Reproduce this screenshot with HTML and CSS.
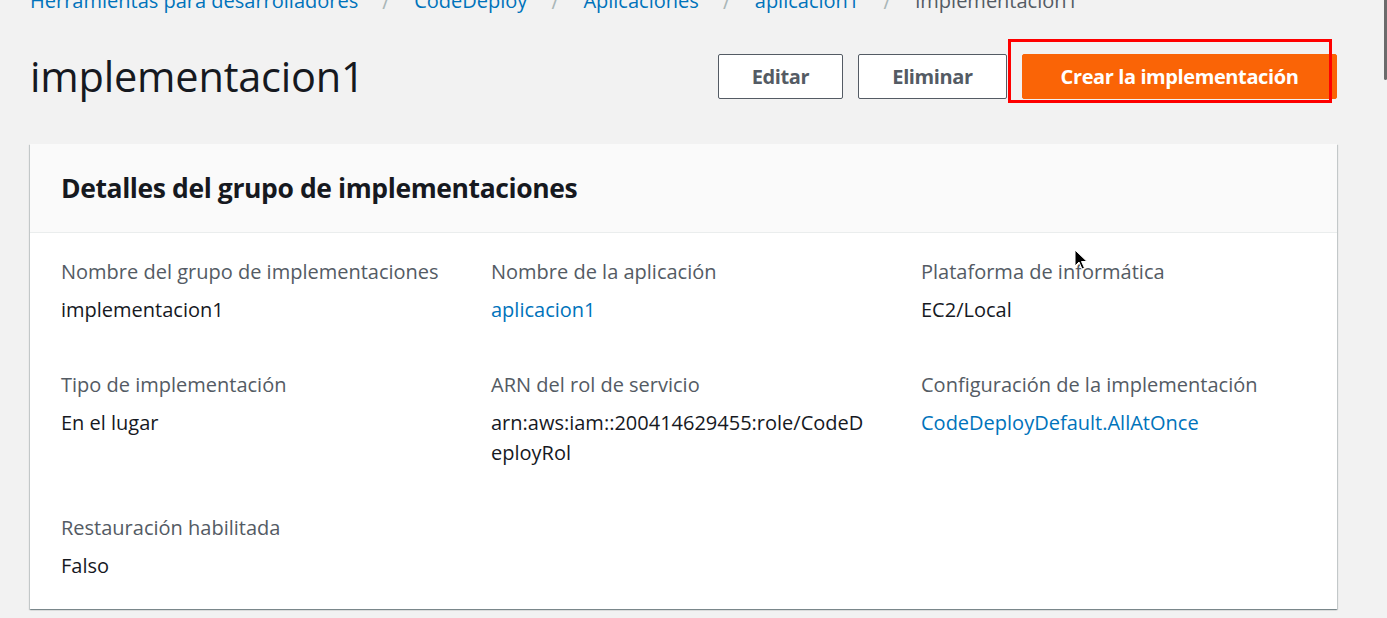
FILE: index.html
```html
<!DOCTYPE html>
<html lang="es">
<head>
<meta charset="utf-8">
<title>implementacion1</title>
<link rel="stylesheet" href="styles.css">
</head>
<body>
<div class="scrollbar"></div>
<main class="page">
  <nav class="breadcrumb">
    <a href="#">Herramientas para desarrolladores</a>
    <span class="sep">/</span>
    <a href="#">CodeDeploy</a>
    <span class="sep">/</span>
    <a href="#">Aplicaciones</a>
    <span class="sep">/</span>
    <a href="#">aplicacion1</a>
    <span class="sep">/</span>
    <span class="current">implementacion1</span>
  </nav>
  <header class="title-row">
    <h1 class="title">implementacion1</h1>
    <div class="actions">
      <button class="btn btn-edit">Editar</button>
      <button class="btn btn-delete">Eliminar</button>
      <div class="primary-wrap">
        <button class="btn btn-primary">Crear la implementación</button>
        <div class="highlight"></div>
      </div>
    </div>
  </header>
  <section class="card">
    <div class="card-header">
      <h2>Detalles del grupo de implementaciones</h2>
    </div>
    <div class="card-body">
      <div class="item">
        <div class="label">Nombre del grupo de implementaciones</div>
        <div class="value">implementacion1</div>
      </div>
      <div class="item">
        <div class="label">Nombre de la aplicación</div>
        <div class="value"><a href="#">aplicacion1</a></div>
      </div>
      <div class="item">
        <div class="label">Plataforma de informática</div>
        <div class="value">EC2/Local</div>
        <svg class="cursor" width="14" height="22" viewBox="0 0 14 22"><path d="M1 1 L1 17 L5 13 L8 20 L10.5 19 L7.5 12.5 L13 12.5 Z" fill="#000" stroke="#fff" stroke-width="1"/></svg>
      </div>
      <div class="item">
        <div class="label">Tipo de implementación</div>
        <div class="value">En el lugar</div>
      </div>
      <div class="item">
        <div class="label">ARN del rol de servicio</div>
        <div class="value arn">arn:aws:iam::200414629455:role/CodeDeployRol</div>
      </div>
      <div class="item">
        <div class="label">Configuración de la implementación</div>
        <div class="value"><a href="#">CodeDeployDefault.AllAtOnce</a></div>
      </div>
      <div class="item">
        <div class="label">Restauración habilitada</div>
        <div class="value">Falso</div>
      </div>
    </div>
  </section>
</main>
</body>
</html>
```

FILE: styles.css
```css
* { box-sizing: border-box; }
html, body { margin: 0; padding: 0; }
body {
  background: #f2f2f2;
  font-family: "Open Sans", "Noto Sans", sans-serif;
  color: #16191f;
  overflow: hidden;
  height: 618px;
  position: relative;
}
a { color: #0073bb; text-decoration: none; }

.scrollbar {
  position: absolute;
  right: 0;
  top: 0;
  width: 3px;
  height: 80px;
  background: #6b6b6b;
  border-radius: 0 0 2px 2px;
}

.page {
  width: 1307px;
  margin-left: 30px;
}

.breadcrumb {
  display: flex;
  align-items: center;
  margin-top: -11px;
  height: 24px;
  font-size: 20px;
  line-height: 24px;
  white-space: nowrap;
}
.breadcrumb .sep {
  color: #aab7b8;
  width: 56px;
  text-align: center;
  font-size: 21px;
}
.breadcrumb .current { color: #545b64; }

.title-row {
  display: flex;
  align-items: center;
  justify-content: space-between;
  height: 62px;
  margin-top: 32px;
}
.title {
  margin: 0;
  font-size: 41.5px;
  font-weight: 400;
  line-height: 48px;
  letter-spacing: -0.2px;
  color: #16191f;
}
.actions {
  display: flex;
  align-items: center;
  gap: 15px;
}
.btn {
  font-family: inherit;
  font-size: 20px;
  font-weight: 700;
  height: 45px;
  padding: 0;
  background: #fff;
  color: #545b64;
  border: 1px solid #545b64;
  border-radius: 2px;
  letter-spacing: -0.4px;
}
.btn-edit { width: 125px; }
.btn-delete { width: 149px; }
.primary-wrap { position: relative; }
.btn-primary {
  width: 315px;
  background: #fa6406;
  border-color: #fa6406;
  color: #fff;
  display: block;
}
.highlight {
  position: absolute;
  left: -14px;
  top: -15px;
  width: 324px;
  height: 64px;
  border: 3px solid #ff0000;
}

.card {
  margin-top: 37px;
  background: #fff;
  box-shadow: 0 1px 1px 0 rgba(0,28,36,0.3), 1px 1px 1px 0 rgba(0,28,36,0.15), -1px 1px 1px 0 rgba(0,28,36,0.15);
}
.card-header {
  background: #fafafa;
  height: 89px;
  border-bottom: 1px solid #eaeded;
  display: flex;
  align-items: center;
  padding-left: 31px;
}
.card-header h2 {
  margin: 0;
  font-size: 26.5px;
  font-weight: 700;
  letter-spacing: -0.4px;
  color: #16191f;
}
.card-body {
  display: grid;
  grid-template-columns: 430px 430px 1fr;
  row-gap: 45px;
  padding: 24px 31px 28px;
}
.item { position: relative; }
.label {
  color: #545b64;
  font-size: 20px;
  line-height: 30px;
  margin-bottom: 8px;
}
.value {
  font-size: 20px;
  line-height: 30px;
  color: #16191f;
}
.arn {
  word-break: break-all;
  width: 376px;
}
.cursor {
  position: absolute;
  left: 153px;
  top: -8px;
}
```
